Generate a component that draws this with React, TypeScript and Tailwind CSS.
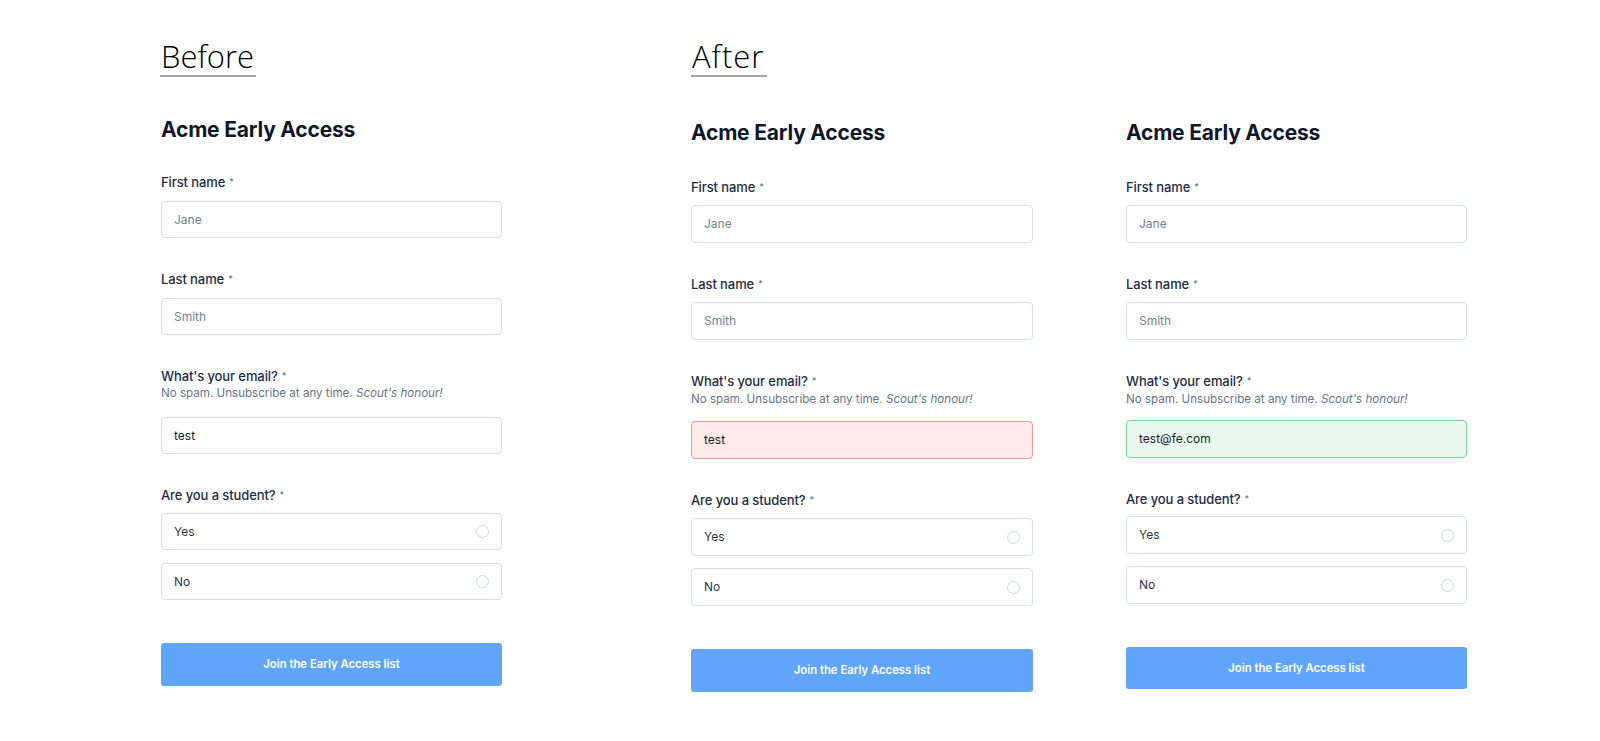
import React from "react";

type Variant = "before" | "after1" | "after2";

const cfg: Record<Variant, Record<string, string>> = {
  before: {
    heading: "mt-[41px]",
    l1: "mt-[32px]",
    in: "mt-[11px] h-[37px]",
    l: "mt-[33px]",
    help: "mt-[1px]",
    emailIn: "mt-[16px] h-[37px]",
    yes: "mt-[10px] h-[37px]",
    no: "mt-[13px] h-[37px]",
    btn: "mt-[43px] h-[43px]",
  },
  after1: {
    heading: "mt-[44px]",
    l1: "mt-[34px]",
    in: "mt-[10px] h-[38px]",
    l: "mt-[33px]",
    help: "mt-[2px]",
    emailIn: "mt-[14px] h-[38px]",
    yes: "mt-[10px] h-[38px]",
    no: "mt-[12px] h-[38px]",
    btn: "mt-[43px] h-[43px]",
  },
  after2: {
    heading: "mt-[44px]",
    l1: "mt-[34px]",
    in: "mt-[10px] h-[38px]",
    l: "mt-[33px]",
    help: "mt-[2px]",
    emailIn: "mt-[13px] h-[38px]",
    yes: "mt-[9px] h-[38px]",
    no: "mt-[12px] h-[38px]",
    btn: "mt-[43px] h-[42px]",
  },
};

function Label({ text, cls }: { text: string; cls: string }) {
  return (
    <div className={`${cls} h-[16px] leading-[16px] text-[13px] font-medium text-[#1e2b45] tracking-[-0.1px]`}>
      {text}
      <span className="ml-[4px] text-[9px] align-[2px] text-[#64748b]">*</span>
    </div>
  );
}

function Field({ value, placeholder, cls, state }: { value?: string; placeholder?: string; cls: string; state?: "error" | "ok" | "none" }) {
  const look =
    state === "error"
      ? "bg-[#fdebea] border-[#f2998f]"
      : state === "ok"
      ? "bg-[#eaf8ef] border-[#74d891]"
      : "bg-white border-[#d6deea]";
  return (
    <div className={`${cls} ${look} border rounded-[4px] flex items-center pl-[12px] text-[12px]`}>
      {value ? (
        <span className="text-[#1a202c]">{value}</span>
      ) : (
        <span className="text-[#718096]">{placeholder}</span>
      )}
    </div>
  );
}

function Radio({ text, cls }: { text: string; cls: string }) {
  return (
    <div className={`${cls} border border-[#d6deea] rounded-[4px] flex items-center justify-between pl-[12px] pr-[12px] text-[12px] text-[#2d3748]`}>
      <span>{text}</span>
      <span className="w-[13px] h-[13px] rounded-full border border-[#cfd8e3] bg-white" />
    </div>
  );
}

function Form({ v, email, state }: { v: Variant; email: string; state: "error" | "ok" | "none" }) {
  const c = cfg[v];
  return (
    <div className="flex flex-col">
      <h2 className={`${c.heading} h-[24px] leading-[24px] text-[21px] font-bold text-[#0f172a] tracking-[-0.2px]`}>
        Acme Early Access
      </h2>
      <Label text="First name" cls={c.l1} />
      <Field placeholder="Jane" cls={c.in} />
      <Label text="Last name" cls={c.l} />
      <Field placeholder="Smith" cls={c.in} />
      <Label text="What's your email?" cls={c.l} />
      <div className={`${c.help} h-[16px] leading-[16px] text-[11.6px] text-[#64748b]`}>
        No spam. Unsubscribe at any time. <i>Scout's honour!</i>
      </div>
      <Field value={email} cls={c.emailIn} state={state} />
      <Label text="Are you a student?" cls={c.l} />
      <Radio text="Yes" cls={c.yes} />
      <Radio text="No" cls={c.no} />
      <button className={`${c.btn} w-full rounded-[3px] bg-[#60a5fa] text-white text-[11.3px] font-semibold`}>
        Join the Early Access list
      </button>
    </div>
  );
}

function Header({ text, extra }: { text: string; extra: string }) {
  return (
    <div className="h-[77px] pt-[41px]">
      {text ? (
        <div
          className={`inline-block h-[36px] leading-[30px] text-[31px] font-light text-black pb-[4px] border-b-2 border-[#a3a3a3] ${extra}`}
          style={{ fontFamily: '"Open Sans", sans-serif' }}
        >
          {text}
        </div>
      ) : null}
    </div>
  );
}

export default function App() {
  return (
    <div
      className="w-[1600px] h-[741px] bg-white flex overflow-hidden"
      style={{ fontFamily: 'Inter, "Noto Sans", sans-serif' }}
    >
      <div className="ml-[161px] w-[341px] flex flex-col">
        <Header text="Before" extra="-ml-[1px] pl-[1px] pr-[2px]" />
        <Form v="before" email="test" state="none" />
      </div>
      <div className="ml-[189px] w-[342px] flex flex-col">
        <Header text="After" extra="ml-[0px] pl-[1px] pr-[3px] tracking-[1px]" />
        <Form v="after1" email="test" state="error" />
      </div>
      <div className="ml-[93px] w-[341px] flex flex-col">
        <Header text="" extra="" />
        <Form v="after2" email="test@fe.com" state="ok" />
      </div>
    </div>
  );
}
